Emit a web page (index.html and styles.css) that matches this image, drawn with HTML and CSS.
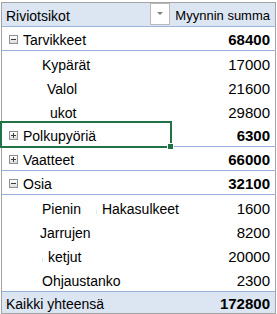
FILE: index.html
```html
<!DOCTYPE html>
<html>
<head>
<meta charset="utf-8">
<link rel="stylesheet" href="styles.css">
</head>
<body>
<div class="pivot">
  <div class="row head">
    <div class="lab"><span class="head-text">Riviotsikot</span><span class="dd"><span class="tri"></span></span></div>
    <div class="val head-val">Myynnin summa</div>
  </div>
  <div class="row line">
    <div class="lab grp"><span class="tog minus"></span>Tarvikkeet</div>
    <div class="val bold">68400</div>
  </div>
  <div class="row">
    <div class="lab sub ind-kyp">Kypärät</div>
    <div class="val">17000</div>
  </div>
  <div class="row">
    <div class="lab sub ind-val">Valol</div>
    <div class="val">21600</div>
  </div>
  <div class="row">
    <div class="lab sub ind-uko">ukot</div>
    <div class="val">29800</div>
  </div>
  <div class="row line">
    <div class="lab grp sel-cell"><span class="tog plus"></span>Polkupyöriä<span class="sel"><span class="handle"></span></span></div>
    <div class="val bold">6300</div>
  </div>
  <div class="row line">
    <div class="lab grp"><span class="tog plus"></span>Vaatteet</div>
    <div class="val bold">66000</div>
  </div>
  <div class="row line">
    <div class="lab grp"><span class="tog minus"></span>Osia</div>
    <div class="val bold">32100</div>
  </div>
  <div class="row">
    <div class="lab sub ind-pie">Pienin<span class="mark mark-hak"></span><span class="hak">Hakasulkeet</span></div>
    <div class="val">1600</div>
  </div>
  <div class="row">
    <div class="lab sub ind-jar">Jarrujen</div>
    <div class="val">8200</div>
  </div>
  <div class="row">
    <div class="lab sub ind-ket"><span class="mark mark-ket"></span>ketjut</div>
    <div class="val">20000</div>
  </div>
  <div class="row">
    <div class="lab sub ind-ohj">Ohjaustanko</div>
    <div class="val">2300</div>
  </div>
  <div class="row total">
    <div class="lab">Kaikki yhteensä</div>
    <div class="val bold">172800</div>
  </div>
</div>
</body>
</html>
```
FILE: styles.css
```css
html, body {
  margin: 0;
  padding: 0;
  background: #ffffff;
}
body {
  font-family: "Liberation Sans", Arial, sans-serif;
  font-size: 14px;
  color: #000;
}
.pivot {
  margin: 2px 0 0 1px;
  width: 275px;
  height: 312px;
  box-sizing: border-box;
  border: 1px solid #a3a3a3;
  display: flex;
  flex-direction: column;
  overflow: visible;
}
.row {
  display: flex;
  align-items: flex-end;
  height: 24px;
  box-sizing: border-box;
  line-height: 16px;
  flex: none;
}
.row.line {
  border-bottom: 1px solid #95b0da;
}
.lab {
  width: 169px;
  flex: none;
  box-sizing: border-box;
  display: flex;
  align-items: flex-end;
  padding-bottom: 2px;
  height: 100%;
  white-space: nowrap;
  position: relative;
}
.val {
  flex: 1;
  text-align: right;
  padding: 0 5px 2px 0;
  font-size: 15px;
}
.bold {
  font-weight: bold;
}
.head {
  background: #dce5f2;
  border-bottom: 1px solid #9cb4dc;
}
.head .lab {
  padding-left: 4px;
  align-items: stretch;
  padding-bottom: 0;
}
.head-text {
  align-self: flex-end;
  padding-bottom: 2px;
}
.head-val {
  font-size: 13px;
  padding-right: 5px;
}
.dd {
  margin-left: auto;
  margin-right: 1px;
  width: 20px;
  height: 22px;
  box-sizing: border-box;
  border: 1px solid #b9b9b9;
  background: #ffffff;
  display: flex;
  align-items: center;
  justify-content: center;
  align-self: flex-start;
}
.tri {
  width: 0;
  height: 0;
  border-left: 3px solid transparent;
  border-right: 3px solid transparent;
  border-top: 3px solid #808080;
  margin-top: -1px;
}
.grp {
  padding-left: 7px;
}
.tog {
  width: 9px;
  height: 9px;
  box-sizing: border-box;
  border: 1px solid #8f8f8f;
  background: linear-gradient(#ffffff, #dedede);
  margin: 0 5px 4px 0;
  position: relative;
  flex: none;
}
.tog::before,
.tog::after {
  content: "";
  position: absolute;
  background: #3c3c3c;
}
.tog::before {
  left: 1px;
  top: 3px;
  width: 5px;
  height: 1px;
}
.tog.plus::after {
  left: 3px;
  top: 1px;
  width: 1px;
  height: 5px;
}
.ind-kyp { padding-left: 40px; }
.ind-val { padding-left: 45px; }
.ind-uko { padding-left: 48px; }
.ind-pie { padding-left: 40px; }
.ind-jar { padding-left: 38px; }
.ind-ket { padding-left: 40px; }
.ind-ohj { padding-left: 40px; }
.hak {
  margin-left: 5px;
}
.mark {
  width: 1px;
  height: 4px;
  background: #cdeef6;
  margin-bottom: 3px;
  flex: none;
}
.mark-hak {
  margin-left: 15px;
}
.mark-ket {
  margin-right: 5px;
}
.sel {
  position: absolute;
  left: -2px;
  top: -2px;
  width: 172px;
  height: 27px;
  box-sizing: border-box;
  border: 2px solid #217346;
}
.handle {
  position: absolute;
  right: -4px;
  bottom: -4px;
  width: 5px;
  height: 5px;
  background: #217346;
  border: 1px solid #ffffff;
}
.total {
  background: #dce5f2;
  border-top: 1px solid #95b0da;
  height: 22px;
  margin-top: auto;
}
.total .lab {
  padding-left: 4px;
  padding-bottom: 1px;
}
.total .val {
  padding-bottom: 1px;
}
```
